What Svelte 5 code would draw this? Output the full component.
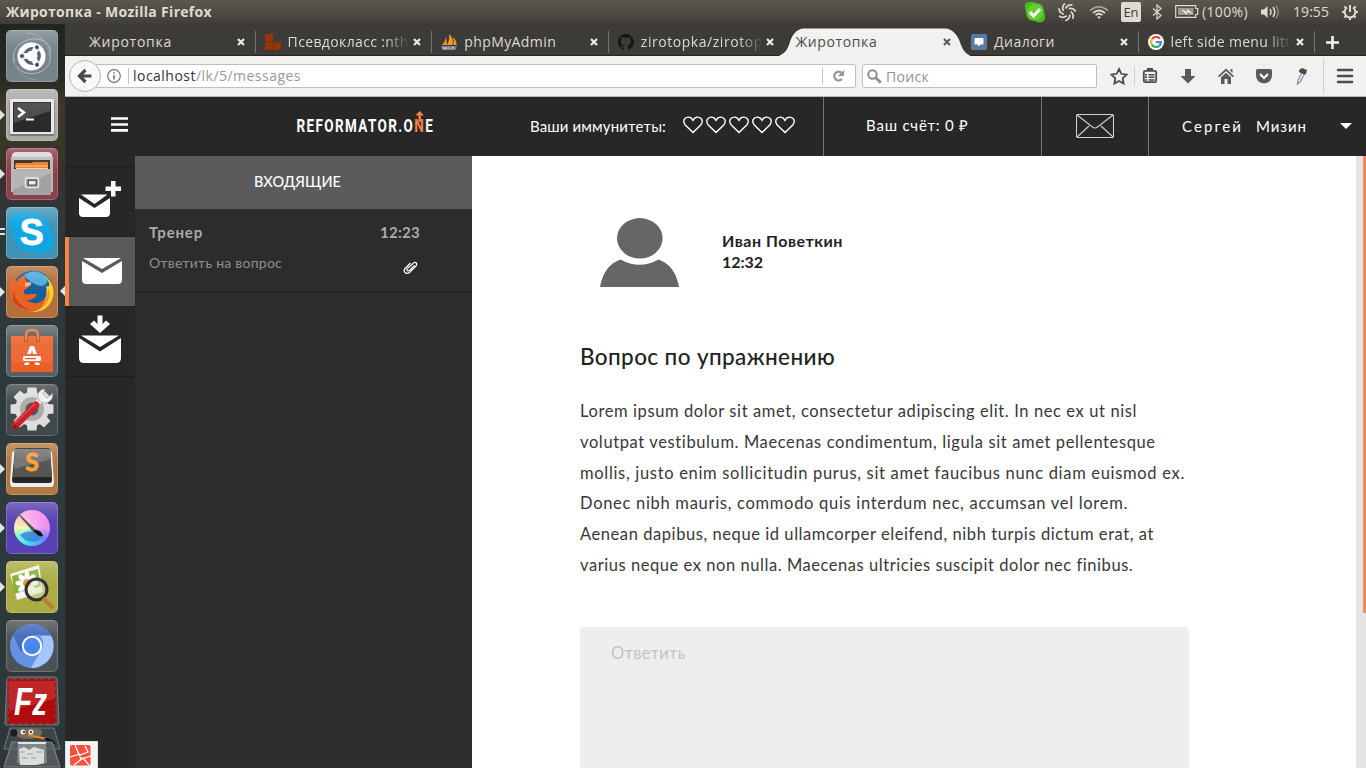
<script>
  // Spreads a line of text over a given width by adjusting its tracking.
  function fit(node, width) {
    const natural = node.getBoundingClientRect().width;
    node.style.letterSpacing = `${(width - natural) / node.textContent.length}px`;
  }

  const tabs = [
    { title: 'Жиротопка', icon: null, w: 83 },
    { title: 'Псевдокласс :nth', icon: 'blocks', w: 121, cut: true },
    { title: 'phpMyAdmin', icon: 'pma', w: 92 },
    { title: 'zirotopka/zirotop', icon: 'github', w: 122, cut: true },
    { title: 'Жиротопка', icon: null, w: 82, active: true },
    { title: 'Диалоги', icon: 'vk', w: 61 },
    { title: 'left side menu litt', icon: 'google', w: 120, cut: true }
  ];

  const apps = [
    { id: 'dash', bg: '#76848a' },
    { id: 'terminal', bg: '#aaa8a8', run: 1 },
    { id: 'files', bg: '#8e3f4c', run: 1 },
    { id: 'skype', bg: '#4193b4', run: 2 },
    { id: 'firefox', bg: '#b56f3a', run: 1, focus: true },
    { id: 'store', bg: '#596063' },
    { id: 'settings', bg: '#42494c' },
    { id: 'sublime', bg: '#b27840', run: 1 },
    { id: 'krita', bg: '#5741b3', run: 1 },
    { id: 'viewer', bg: '#abad42', run: 1 },
    { id: 'chromium', bg: '#4d5254' }
  ];

  const body = [
    ['Lorem ipsum dolor sit amet, consectetur adipiscing elit. In nec ex ut nisl', 557],
    ['volutpat vestibulum. Maecenas condimentum, ligula sit amet pellentesque', 576],
    ['mollis, justo enim sollicitudin purus, sit amet faucibus nunc diam euismod ex.', 605],
    ['Donec nibh mauris, commodo quis interdum nec, accumsan vel lorem.', 548],
    ['Aenean dapibus, neque id ullamcorper eleifend, nibh turpis dictum erat, at', 574],
    ['varius neque ex non nulla. Maecenas ultricies suscipit dolor nec finibus.', 553]
  ];
  const cog = [0, 45, 90, 135, 180, 225, 270, 315];
</script>

<div class="desktop">
  <div class="panel">
    <b class="wintitle"><span use:fit={206}>Жиротопка - Mozilla Firefox</span></b>
    <div class="tray">
      <svg class="t-skype" width="22" height="22" viewBox="0 0 22 22"><path d="M1 6Q0 1 6 1Q9 0 12 2Q20 2 20 11Q23 18 18 21Q14 22 11 20Q2 20 2 11Q1 9 1 6Z" fill="#4fb81c"/><circle cx="11" cy="11" r="8" fill="#65ce31"/><path d="M6 11l3.500 4L16 8" stroke="#fff" stroke-width="3" fill="none"/></svg>
      <svg class="t-swirl" width="18" height="18" viewBox="-9 -9 18 18" fill="none" stroke="#dfdbd2" stroke-width="1.700">{#each [0, 51, 103, 154, 206, 257, 309] as a}<path transform="rotate({a})" d="M-1.500-3.500Q1-8 5.500-7"/>{/each}</svg>
      <svg class="t-wifi" width="20" height="14" viewBox="0 0 20 14" fill="none" stroke="#dfdbd2"><path d="M1 5.500Q10-2 19 5.500" stroke="#aaa79f" stroke-width="1.600"/><path d="M4 8Q10 3 16 8" stroke-width="1.700"/><path d="M6.500 10.200Q10 7.300 13.500 10.200" stroke-width="1.700"/><path d="M8.200 12L10 14l1.800-2Q10 10.500 8.200 12" fill="#dfdbd2" stroke="none"/></svg>
      <span class="lang">En</span>
      <svg class="t-bt" width="10" height="16" viewBox="0 0 10 16" fill="none" stroke="#dfdbd2" stroke-width="1.200"><path d="M1 4.500l8 7-4 3.500V1l4 3.500-8 7"/></svg>
      <svg class="t-bat" width="24" height="13" viewBox="0 0 24 13"><path d="M.7.7h20v2.800h2v6h-2v2.800h-20z" fill="none" stroke="#dfdbd2" stroke-width="1.200"/><path d="M3 3h15.500v7H3z" fill="#9b988f"/><path d="M6 4l6 3 .5-3L18 9l-6-2-.5 3z" fill="#f1eee7"/></svg>
      <span class="pct" use:fit={46}>(100%)</span>
      <svg class="t-vol" width="20" height="16" viewBox="0 0 20 16" fill="none" stroke="#dfdbd2" stroke-width="1.500"><path d="M1 5.500h3L7.500 2v12L4 10.500H1z" fill="#dfdbd2" stroke="none"/><path d="M10 5q2 3 0 6M13 3q3.500 5 0 10"/><path d="M16 1.500q4.500 6.500 0 13" stroke="#8b887f"/></svg>
      <span class="clock" use:fit={36}>19:55</span>
      <svg class="t-cog" width="16" height="18" viewBox="-8 -9 16 18" fill="none" stroke="#dfdbd2"><path d="M-3-4.500A5.400 5.400 0 1 0 3-4.500M0-7V0" stroke-width="2"/>{#each [45, 90, 135, 180, 225, 270, 315] as a}<path transform="rotate({a})" d="M0-5.500V-8" stroke-width="2"/>{/each}</svg>
    </div>
  </div>

  <div class="work">
    <aside class="launcher">
      {#each apps as app}
        <div class="slot">
          <div class="tile {app.id}" style="background-color:{app.bg}">
            <svg width="52" height="52" viewBox="0 0 52 52">
              {#if app.id === 'dash'}
                <g fill="none" stroke="#aeb9bc"><path d="M8 33Q4 14 25 9Q40 7 45 20" /><path d="M43 16Q49 38 31 43Q17 46 11 36"/><path d="M20 3Q42 3 43 27M31 50Q10 49 8 28" opacity=".5"/></g>
                <circle cx="25.500" cy="26.500" r="14" fill="#fff"/><circle cx="26" cy="26" r="7.200" fill="none" stroke="#596468" stroke-width="3.400"/>
                {#each [60, 180, 300] as a}<g transform="rotate({a} 26 26)"><path d="M31 26h3" stroke="#fff" stroke-width="6"/><circle cx="36" cy="26" r="2.500" fill="#454e52" stroke="#fff"/></g>{/each}
              {:else if app.id === 'terminal'}
                <rect x="3.500" y="10" width="45" height="37" rx="2" fill="#777"/><rect x="4" y="10" width="44" height="35" rx="1" fill="#e9e9e9"/><rect x="7" y="13" width="38" height="30" fill="#2a2a2a"/><path d="M8 14h36v8L8 34z" fill="#666" opacity=".6"/><path d="M12 19l6 4.500-6 4.500" fill="none" stroke="#fff" stroke-width="2.500"/><path d="M20 30.500h8" stroke="#fff" stroke-width="2"/>
              {:else if app.id === 'files'}
                <path d="M6 6l3-2h34l3 2v38H6z" fill="#d8d8d8"/><path d="M5 9h42v35H5z" fill="#b9b9b9"/><path d="M8 12h36v10H8z" fill="#3d2b20"/><path d="M9 17l1-2h16l1-1h15v6H9z" fill="#ef7c2d"/><path d="M10 18h32M10 20.500h32" stroke="#ffcf9c"/><path d="M7 21h38v26H7z" fill="#a2a2a2"/><path d="M7 21h38v4L7 42z" fill="#bdbdbd" opacity=".7"/><rect x="19.500" y="30" width="13" height="9.500" rx="2" fill="#888" stroke="#ededed" stroke-width="1.400"/><rect x="22.500" y="32.500" width="7.500" height="4.500" fill="#eee" stroke="#555"/>
              {:else if app.id === 'skype'}
                <path d="M4 13Q5 4 15 5Q19 4 24 6Q44 6 46 27Q50 34 45 42Q39 49 29 45Q8 45 6 25Q4 19 4 13Z" fill="#11a5e3"/><text x="25.700" y="38" text-anchor="middle" font-family="Liberation Sans" font-weight="bold" font-size="36" fill="#fff" stroke="#fff" stroke-width=".8">S</text>
              {:else if app.id === 'firefox'}
                <circle cx="27" cy="25" r="20.500" fill="#155f9f"/><path d="M18 9Q29 1 41 11Q43 19 35 20Q24 18 18 9" fill="#4fa9dc"/><path d="M38 9Q50 18 47 31Q42 47 25 46L21 41Q44 40 40 20Q44 22 43 17Q41 12 38 9" fill="#ffd028"/><path d="M43 22Q46 36 34 43Q29 46 23 45Q40 40 43 22" fill="#f3952a"/><path d="M5 10Q7 15 11 15Q14 10 20 9Q17 14 24 17Q25 21 18 24Q17 30 24 28L31 28Q28 35 20 34Q29 41 39 33Q37 44 26 46Q5 44 4 25Q3 17 5 10Z" fill="#ea6326"/><path d="M19 17l6-1v3l-6 2z" fill="#e9b8a0"/><path d="M7 26Q11 39 24 44Q11 43 7 34z" fill="#c84120"/>
              {:else if app.id === 'store'}
                <path d="M5 11h42v36H5z" fill="#ee6a38"/><path d="M5 37h42v10H5z" fill="#ec5f26"/><path d="M20 17V10Q20 5 26 5Q32 5 32 10V17" fill="none" stroke="#b94c26" stroke-width="3.600"/><path d="M20 16V10Q20 5 26 5Q32 5 32 10V16" fill="none" stroke="#f08a62" stroke-width="1.600"/><path d="M24 21h4l3 8h-4l-1-4-1 4h-4z" fill="#fff"/><rect x="17" y="31" width="18" height="5" rx="1.500" fill="#fff"/><path d="M19 33h11v1.300H19z" fill="#e95920"/><path d="M19 37.500h4.500L22.500 40H18zM28.500 37.500H33l1 2.500h-4.500z" fill="#fff"/>
              {:else if app.id === 'settings'}
                {#each cog as a}<path transform="rotate({a} 26 25)" d="M21.500 3.500h9l1 9H20.500z" fill="#ddd"/>{/each}<circle cx="26" cy="25" r="17" fill="#ddd"/><circle cx="26" cy="25" r="12" fill="#ababab"/><circle cx="26" cy="25" r="6.500" fill="#52585a"/><path d="M28 23l8-9" stroke="#e6e6e6" stroke-width="6"/><path d="M39 5a7 7 0 0 0-6 11q6 7 13-1l1-6-6 5-4-4z" fill="#f0f0f0" stroke="#888" stroke-width=".6"/><path d="M9 42L30 21" stroke="#cc2028" stroke-width="7" stroke-linecap="round"/><path d="M9 39L29 20" stroke="#ed6b6c"/><circle cx="9" cy="43" r="2" fill="#7b191c"/>
              {:else if app.id === 'sublime'}
                <path d="M4 39L6 10q0-2 3-2h34q3 0 3 2l2 29q0 5-3 5H7q-3 0-3-5" fill="#eee"/><path d="M6 37L9 6q0-1 2-1h31q2 0 2 1l2 31q0 3-3 3H9q-3 0-3-3" fill="#252525"/><path d="M9 6h35l2 28H7z" fill="#555"/><path d="M9 6h35l1 10L8 26z" fill="#888" opacity=".6"/><text x="26" y="28" text-anchor="middle" font-family="Lato" font-weight="bold" font-size="25" fill="#fda137" stroke="#fda137" stroke-width=".8">S</text>
              {:else if app.id === 'krita'}
                <foreignObject x="8" y="8" width="36" height="36"><div class="wheel"></div></foreignObject><path d="M14 33Q20 28 28 30Q31 36 38 33Q31 43 19 38" fill="#347acd" opacity=".75"/><path d="M5 4L30 28l1 2-3 1-5-6z" fill="#555"/><path d="M28 28q7-1 9 6q-7 1-9-6" fill="#111"/>
              {:else if app.id === 'viewer'}
                <path d="M4 13L33 4l4 27-26 8z" fill="#f6f6ef"/><path d="M6 15l26-7 3 17-27 8z" fill="#86b23d"/>{#each cog as a}<ellipse transform="rotate({a} 21 22)" cx="21" cy="15.500" rx="2.600" ry="5" fill="#fff"/>{/each}<circle cx="21" cy="22" r="4" fill="#e6a135"/><circle cx="30.500" cy="28.500" r="10.500" fill="#dbe3be" opacity=".5"/><circle cx="30.500" cy="28.500" r="10.500" fill="none" stroke="#2d3135" stroke-width="3"/><path d="M37 37l10 10" stroke="#c17a38" stroke-width="4"/>
              {:else}
                <circle cx="26" cy="26" r="22" fill="#6493e6"/><path d="M7 15A22 22 0 0 1 45 15H26L15 32z" fill="#446bbb"/><path d="M45 16A22 22 0 0 1 25 48L36 29Q39 20 34 16z" fill="#a5c5fb"/><circle cx="26" cy="26" r="9.200" fill="#4687ee" stroke="#fff" stroke-width="2"/>
              {/if}
            </svg>
            <i class="gloss"></i>
          </div>
          {#if app.run === 1}<i class="pip"></i>{/if}
          {#if app.run === 2}<i class="pip two"></i>{/if}
          {#if app.focus}<i class="focus"></i>{/if}
        </div>
      {/each}
      <svg class="stack" width="65" height="94" viewBox="0 0 65 94">
        <path d="M9 1q-2 0-2 3L5 47q0 2 2 2h50q2 0 2-2L57 4q0-3-2-3z" fill="#5b5051" stroke="#777c7e"/>
        <path d="M9 4h46v43H9z" fill="#b20b0e"/><path d="M9 4h46v43H9z" fill="none" stroke="#b20b0e" stroke-width="3" stroke-dasharray="4 3"/><path d="M9 5h46v18L9 35z" fill="#df6664" opacity=".3"/>
        <text x="14" y="39" font-family="Liberation Sans" font-weight="bold" font-style="italic" font-size="39" fill="#fff" textLength="33" lengthAdjust="spacingAndGlyphs">Fz</text>
        <path d="M10 52L4 73h56l-6-21z" fill="#3e4546" stroke="#747979"/><path d="M15 54q12-4 27 0q1 8-10 9q-15 1-20-7" fill="#756957"/><circle cx="14" cy="57" r="3.500" fill="#171c21"/><circle cx="23" cy="56" r="2.500" fill="#e9e9e9"/><circle cx="31" cy="56" r="2.500" fill="#e9e9e9"/><circle cx="24" cy="56" r="1" fill="#111"/><circle cx="31" cy="56" r="1" fill="#111"/><path d="M28 59l19 4" stroke="#e58a26" stroke-width="2"/><path d="M44 62q7-1 12 6q-9-1-12-6" fill="#111"/>
        <path d="M12 66L4 91h56l-8-25z" fill="#5c6263" fill-opacity=".8" stroke="#878c8d"/><path d="M18 66h28l1 21q-15 4-30 0z" fill="#a2a6a5" opacity=".6"/><path d="M19 73l5-2 5 3 5-3 10 3v13l-8 2H20z" fill="#dcdedb"/><path d="M20 76h5m2 2h6m3-2h6m-20 6h6m3 0h5" stroke="#bbb" stroke-width="2"/><path d="M18 67h28" stroke="#e4e7e7" stroke-width="2"/>
      </svg>
    </aside>

    <div class="browser">
      <div class="tabstrip">
        {#each tabs as tab, i}
          <div class="tab" class:active={tab.active} class:nosep={i === 3 || i === 4}>
            {#if tab.active}
              <svg class="shape" width="206" height="29" viewBox="0 0 206 29"><path d="M0 28.500Q10 28 14 17Q18 1 29 .5H170Q181 1 186 17Q190 28 199 28.500V29H0z" fill="#f2f1f0"/></svg>
            {/if}
            {#if tab.icon}
              <svg class="fav" width="16" height="16" viewBox="0 0 16 16">
                {#if tab.icon === 'blocks'}<path d="M0 0h8v7.500H0zM0 8.300h7.600V16H0zM8.300 8.300H16V16H8.300z" fill="#993300"/>
                {:else if tab.icon === 'pma'}<path d="M1 11Q4 8 5 3L6 11zM6 11Q9 6 8 0q5 4 3.500 11zM12.500 11q.5-4-.5-8 4 4 3.500 8z" fill="#f29a24"/><path d="M0 12h16l-1.500 4H2z" fill="#77789c"/><path d="M2 15.500v-2.500l2 2 1-2 1 2m2 0v-2m2 2l2-2 1 2" stroke="#ddd" fill="none" stroke-width=".8"/>
                {:else if tab.icon === 'github'}<path d="M8 0a8 8 0 0 0-2.600 15.600c.4.100.6-.2.6-.4v-1.500c-2.200.5-2.700-1-2.700-1-.4-.9-.9-1.200-.9-1.200-.7-.5.1-.5.1-.5.8.1 1.200.8 1.200.8.7 1.300 1.900.9 2.300.7.100-.5.300-.9.500-1.100-1.800-.2-3.600-.9-3.600-4 0-.9.300-1.600.8-2.100-.1-.2-.4-1 .1-2.200 0 0 .7-.2 2.200.8a7.500 7.500 0 0 1 4 0c1.500-1 2.200-.8 2.200-.8.400 1.100.2 2 .1 2.200.5.600.8 1.300.8 2.100 0 3.100-1.900 3.700-3.700 4 .3.200.6.700.6 1.500v2.200c0 .2.100.5.600.4A8 8 0 0 0 8 0z" fill="#161514"/>
                {:else if tab.icon === 'vk'}<rect width="16" height="16" rx="1.500" fill="#587ba4"/><path d="M4.500 4h7q1 0 1 1v4.500q0 1-1 1H9.500L7 12.500v-2H4.500q-1 0-1-1V5q0-1 1-1" fill="#fff"/>
                {:else}<circle cx="8" cy="8" r="8" fill="#fff"/><g fill="none" stroke-width="2.200"><path d="M12 4.700A5 5 0 0 0 4 5.100" stroke="#ea4335"/><path d="M4 5.100a5 5 0 0 0-.2 5.500" stroke="#fbbc05"/><path d="M3.800 10.600a5 5 0 0 0 7.500 1.200" stroke="#34a853"/><path d="M11.300 11.800A5 5 0 0 0 12.900 8H8" stroke="#4285f4"/></g>{/if}
              </svg>
            {/if}
            <span class="name" class:cut={tab.cut} use:fit={tab.w}>{tab.title}</span>
            <svg class="close" width="8" height="8" viewBox="0 0 8 8"><path d="M1 1l6 6M7 1L1 7" stroke-width="2.200"/></svg>
          </div>
        {/each}
        <svg class="plus" width="13" height="13" viewBox="0 0 13 13"><path d="M6.500 0v13M0 6.500h13" stroke="#f4f3f1" stroke-width="2.600"/></svg>
      </div>

      <div class="toolbar">
        <div class="back"><svg width="16" height="16" viewBox="0 0 16 16"><path d="M14.500 8H3M8.500 2L2.500 8l6 6" fill="none" stroke="#4a4a4a" stroke-width="3.200"/></svg></div>
        <div class="url">
          <svg class="info" width="14" height="14" viewBox="0 0 14 14"><circle cx="7" cy="7" r="6.300" fill="none" stroke="#777" stroke-width="1.200"/><path d="M7 6v4.500M7 3.200v1.600" stroke="#777" stroke-width="1.600"/></svg>
          <span class="addr"><span use:fit={168}>localhost<em>/lk/5/messages</em></span></span>
          <svg class="reload" width="33" height="16" viewBox="0 0 33 16"><path d="M.5 0v16" stroke="#c6c5c3"/><path d="M20 11A4.400 4.400 0 1 1 19.800 5" fill="none" stroke="#8c98a3" stroke-width="2.200"/><path d="M22 2v6h-6z" fill="#8c98a3"/></svg>
        </div>
        <div class="search">
          <svg width="15" height="15" viewBox="0 0 15 15"><circle cx="5.500" cy="5.500" r="4.200" fill="none" stroke="#8d8d8d" stroke-width="2"/><path d="M8.800 8.800l5 5" stroke="#8d8d8d" stroke-width="2.800"/></svg>
          <span use:fit={43}>Поиск</span>
        </div>
        <svg class="tools" width="269" height="40" viewBox="0 0 269 40" fill="#4c4c4c">
          <path d="M22 13l2.300 4.800 5.200.8-3.800 3.700.9 5.200-4.600-2.500-4.600 2.500.9-5.200-3.800-3.700 5.200-.8z" fill="none" stroke="#4c4c4c" stroke-width="1.800"/>
          <path d="M37.500 11v18M226.500 3v34" stroke="#d0cfcd"/>
          <rect x="46.800" y="14.800" width="12.400" height="11.400" rx="1.500" fill="none" stroke="#4c4c4c" stroke-width="1.800"/><path d="M50 12h6v3h-6zM48 18h2v1.500h-2zM51.500 18h6v1.500h-6zM48 20.500h2V22h-2zM51.500 20.500h6V22h-6zM48 23.200h2v1.500h-2zM51.500 23.200h6v1.500h-6z"/>
          <path d="M88 13h6v7h4.500L91 27.500 83.500 20H88z" fill="#5a5a5a"/>
          <path d="M129 12.500l8 7.500-1.200 1.200-6.800-6.300-6.800 6.300L121 20zM133.500 13h2v4l-2-2zM124 21.300l5-4.600 5 4.600V28h-3.500v-5h-3v5H124z" fill="#5a5a5a"/>
          <path d="M160.500 13h13q1.500 0 1.500 1.500V19q0 7.500-8 8.500q-8-1-8-8.500v-4.500q0-1.500 1.500-1.500" fill="#5a5a5a"/><path d="M163 18l4 4 4-4" fill="none" stroke="#fff" stroke-width="2"/>
          <path d="M202 14l3-2 5 2-1 4-2 1-5-3z"/><path d="M204.500 17.500l-3.500 7-.5 3.500 2.500-2 4-7" fill="#f7f7fb" stroke="#8292aa" stroke-width="1.300"/>
          <path d="M241 14h14M241 20h14M241 26h14" stroke="#4c4c4c" stroke-width="2.600" stroke-linecap="round"/>
        </svg>
      </div>

      <header class="head">
        <svg class="burger" width="17" height="15" viewBox="0 0 17 15"><path d="M0 1.500h17M0 7.500h17M0 13.300h17" stroke="#fff" stroke-width="2.700"/></svg>
        <svg class="logo" width="140" height="26" viewBox="0 0 140 26">
          <text transform="translate(1.500 22) scale(.77 1)" class="wordmark" fill="#fff" textLength="177" lengthAdjust="spacing">REFORMATOR.O<tspan fill="#fb8044">N</tspan>E</text>
          <path d="M123.500 12V5.500h-3.100L124.700 1 129 5.500h-3.100V12z" fill="#fb8044"/>
        </svg>
        <div class="lives">
          <span use:fit={136}>Ваши иммунитеты:</span>
          <div class="hearts">{#each [1, 2, 3, 4, 5] as n}<svg width="20" height="18" viewBox="0 0 20 18"><path d="M10 16.600L2 8.700Q-.5 5 2 2.500Q4 .7 6.500 1.300Q8.500 1.700 10 4.300Q11.500 1.700 13.500 1.300Q16 .7 18 2.500Q20.500 5 18 8.700z" fill="none" stroke="#fff" stroke-width="1.400"/></svg>{/each}</div>
        </div>
        <div class="bill"><span use:fit={103}>Ваш счёт: 0 ₽</span></div>
        <div class="post"><svg width="38" height="24" viewBox="0 0 38 24" fill="none" stroke="#d0d0d0" stroke-width="1.100"><rect x=".5" y=".5" width="37" height="23" rx="1.500"/><path d="M1 1l15.500 12q2.500 2 5 0L37 1M1 23l12-11M37 23L25 12"/></svg></div>
        <div class="user"><span use:fit={61}>Сергей</span><span use:fit={51}>Мизин</span><i></i></div>
      </header>

      <div class="page">
        <nav class="rail">
          <div class="rail-item"><svg width="70" height="69" viewBox="0 0 70 69" fill="#fff"><path d="M14 31v15q0 4 4 4h23q4 0 4-4V31L29.500 41z"/><path d="M16 27.500h26.500L29.500 37z"/><path d="M46 14h4.500v5.500H56V24h-5.500v5.500H46V24h-5.500v-4.500H46z"/></svg></div>
          <div class="rail-item on"><svg width="70" height="69" viewBox="0 0 70 69" fill="#fff"><path d="M17 24v19q0 4 4 4h32q4 0 4-4V24L37 36z"/><path d="M18 21h38L37 32z"/></svg></div>
          <div class="rail-item"><svg width="70" height="69" viewBox="0 0 70 69" fill="#fff"><path d="M14 31v20q0 5 5 5h32q5 0 5-5V31L35 44.500z"/><path d="M16 28.500h38L35 40z"/><path d="M32.500 8.500h5V17l3.500-3.500 4 3.500-10 9-10-9 4-3.500 3.500 3.500z"/></svg></div>
          <div class="debug"><svg width="22" height="21" viewBox="0 0 22 21"><rect width="20.500" height="20.500" rx="2" fill="#fb503b"/><path d="M5 0l6 14L21 11M0 12l10-3M10 10l8-3L15 1M4 20l9-7 6 7" fill="none" stroke="#fff" stroke-width="1.300"/></svg></div>
        </nav>
        <section class="inbox">
          <h2><span use:fit={87}>ВХОДЯЩИЕ</span></h2>
          <div class="mail">
            <div class="row strong"><span use:fit={54}>Тренер</span><span use:fit={40}>12:23</span></div>
            <div class="row"><span use:fit={133}>Ответить на вопрос</span><svg width="16" height="15" viewBox="0 0 16 15"><path d="M11.500 5.500L7 10Q4.500 11.800 4 10.300T5 8L10 3.500Q12 1.500 13.300 3T12.500 6.500L7 12Q4 14.500 2 12.500T2.500 8L7.500 3" fill="none" stroke="#fff" stroke-width="1.200"/></svg></div>
          </div>
        </section>
        <main class="message">
          <div class="sender">
            <svg width="79" height="70" viewBox="0 0 79 70" fill="#666"><ellipse cx="39.800" cy="20.300" rx="22.800" ry="20.200"/><path d="M0 69Q4 47 20.500 41.500Q39.500 52 58.500 41.500Q75 47 79 69z"/></svg>
            <div><p><span use:fit={121}>Иван Поветкин</span></p><p><span use:fit={41}>12:32</span></p></div>
          </div>
          <h1><span use:fit={255}>Вопрос по упражнению</span></h1>
          <div class="text">{#each body as [line, w]}<p><span use:fit={w}>{line}</span></p>{/each}</div>
          <div class="reply"><span use:fit={75}>Ответить</span></div>
        </main>
        <div class="scroll"><i></i></div>
      </div>
    </div>
  </div>
</div>

<style>
  :global(body) { margin: 0; overflow: hidden; }
  * { box-sizing: border-box; }
  span { white-space: nowrap; display: inline-block; }
  svg { display: block; flex: none; }
  p, h1, h2 { margin: 0; }
  .desktop { width: 1366px; height: 768px; display: flex; flex-direction: column; overflow: hidden; font-family: "Open Sans", "Noto Sans", sans-serif; }

  .panel { height: 24px; flex: none; display: flex; justify-content: space-between; align-items: center; padding: 0 8px 1px 6px; background: linear-gradient(#5b584f, #45433c 80%, #3e3d37); color: #dfdbd2; font-size: 14px; }
  .wintitle { font-size: 14px; }
  .tray { display: flex; align-items: center; }
  .t-swirl { margin-left: 12px; }
  .t-wifi { margin-left: 13px; }
  .lang { width: 20px; height: 20px; margin-left: 12px; background: #dfdbd2; color: #3c3b37; border-radius: 2px; font-size: 13px; line-height: 20px; text-align: center; }
  .t-bt { margin-left: 11px; }
  .t-bat { margin-left: 13px; }
  .pct { margin-left: 3px; }
  .t-vol { margin-left: 12px; }
  .clock { margin-left: 13px; }
  .t-cog { margin-left: 13px; }

  .work { flex: 1; display: flex; min-height: 0; }
  .launcher { width: 65px; flex: none; padding-top: 6px; overflow: hidden; background: linear-gradient(#20251f, #292b22 55px, #3f3926 85px, #363828 110px, #3d3129 150px, #2f3738 185px, #2e3a3e 420px, #2d3739); }
  .slot { height: 59px; padding-left: 6px; position: relative; }
  .tile { width: 52px; height: 52px; border-radius: 5px; position: relative; overflow: hidden; }
  .gloss { position: absolute; inset: 0; border-radius: 5px; box-shadow: inset 0 0 0 1px rgba(255,255,255,.2); background: linear-gradient(rgba(255,255,255,.22), rgba(255,255,255,.04) 30%, transparent 50%); }
  .wheel { width: 36px; height: 36px; border-radius: 50%; background: radial-gradient(rgba(255,255,255,.3), transparent 60%), conic-gradient(#f79be8, #f08cf3 25%, #5f8cff 37%, #3fd5fa 52%, #6ff8dc 65%, #f5f9a3 75%, #ffbdd1 88%, #f79be8); }
  .pip { position: absolute; left: 0; top: 21px; border: 5px solid transparent; border-left: 5px solid #e4e4e4; border-right: 0; }
  .pip.two { border: 0; width: 5px; height: 7px; border-top: 2px solid #ddd; border-bottom: 2px solid #ddd; }
  .focus { position: absolute; left: 60px; top: 20px; border: 5px solid transparent; border-right-color: #e4e4e4; border-left: 0; }
  .stack { margin-top: -3px; }

  .browser { flex: 1; min-width: 0; display: flex; flex-direction: column; }
  .tabstrip { height: 32px; flex: none; display: flex; padding-left: 13px; background: #3c3b37; border-bottom: 1px solid #262522; color: #dddad5; font-size: 14px; }
  .tab { width: 176.600px; height: 31px; display: flex; align-items: center; position: relative; padding: 5px 10px 0 11px; gap: 6px; }
  .tab::after { content: ""; position: absolute; right: -1px; top: 7px; width: 1px; height: 22px; background: #76746e; }
  .tab.nosep::after { display: none; }
  .tab.active { color: #4c4c4c; }
  .shape { position: absolute; left: -9px; top: 4px; }
  .name { position: relative; line-height: 20px; }
  .cut { -webkit-mask-image: linear-gradient(90deg, #000 80%, transparent); mask-image: linear-gradient(90deg, #000 80%, transparent); }
  .fav { position: relative; left: -1px; }
  .close { position: absolute; right: 10px; top: 14px; stroke: #eceae5; }
  .active .close { stroke: #5c5b58; }
  .plus { margin: 12px 0 0 12px; }

  .toolbar { height: 41px; flex: none; display: flex; align-items: center; background: #f2f1f0; border-bottom: 1px solid #b6b5b3; padding-left: 4px; font-size: 14px; }
  .back { width: 32px; height: 32px; flex: none; display: grid; place-items: center; border: 1px solid #b9b8b6; border-radius: 50%; background: #f9f9f9; position: relative; z-index: 1; }
  .url { width: 761px; height: 24px; margin-left: -6px; display: flex; align-items: center; background: #fff; border: 1px solid #c0bfbd; border-radius: 2px; padding-left: 11px; }
  .addr { flex: 1; margin-left: 7px; border-left: 1px solid #c6c5c3; padding-left: 4px; line-height: 16px; color: #333; }
  .addr em { font-style: normal; color: #999; }
  .search { width: 235px; height: 24px; margin-left: 6px; display: flex; align-items: center; gap: 4px; background: #fff; border: 1px solid #c0bfbd; border-radius: 2px; padding-left: 4px; color: #929292; }
  .tools { height: 40px; }

  .head { height: 59px; flex: none; display: flex; align-items: center; background: #272727; color: #fff; font-family: Lato, sans-serif; font-size: 15px; }
  .burger { margin: -4px 0 0 46px; }
  .logo { margin: -7px 0 0 167px; overflow: visible; }
  .wordmark { font: bold 17.500px Roboto, sans-serif; stroke: none; }
  .lives { width: 293px; display: flex; align-items: center; margin-left: 95px; gap: 18px; }
  .lives > span { margin-top: -2px; }
  .hearts { display: flex; gap: 3px; margin: -3px 0 0 -1px; }
  .bill { width: 218px; height: 59px; padding-left: 42px; border-left: 1px solid #777; line-height: 57px; }
  .post { width: 107px; height: 59px; padding: 17px 0 0 34px; border-left: 1px solid #777; }
  .user { flex: 1; height: 59px; display: flex; align-items: center; padding: 0 0 1px 33px; border-left: 1px solid #777; gap: 13px; }
  .user i { margin-left: 20px; border: 6px solid transparent; border-top: 6px solid #fff; border-bottom: 0; }

  .page { flex: 1; min-height: 0; display: flex; }
  .rail { width: 70px; flex: none; display: flex; flex-direction: column; background: #272727; padding-top: 10px; }
  .rail-item { height: 70px; border-top: 1px solid #1e1e1e; }
  .rail-item:nth-child(3) { height: 71px; border-bottom: 1px solid #1e1e1e; }
  .rail-item.on { background: #5a5a5a; box-shadow: inset 4px 0 #fc8145; }
  .debug { width: 33px; height: 27px; margin-top: auto; background: #f4f4f4; border: 1px solid #ddd; border-bottom: 0; padding: 3px 0 0 4px; }
  .inbox { width: 337px; flex: none; background: #2c2c2c; font-family: Lato, sans-serif; }
  .inbox h2 { height: 53px; background: #5b5b5b; color: #fff; font-size: 14.500px; font-weight: 500; line-height: 52px; padding-left: 119px; }
  .mail { height: 84px; padding: 13px 52px 0 14px; border-bottom: 1px solid #222; color: #8f8f8f; font-size: 14px; }
  .row { display: flex; justify-content: space-between; line-height: 20px; }
  .row + .row { margin-top: 11px; }
  .row svg { margin: 7px 1px 0 0; }
  .strong { font-weight: bold; color: #ababab; font-size: 15px; }
  .message { flex: 1; padding: 62px 0 0 108px; background: #fff; color: #2c2c2c; font-family: Lato, sans-serif; display: flex; flex-direction: column; }
  .sender { height: 70px; padding-left: 20px; display: flex; gap: 43px; font-weight: bold; font-size: 16px; line-height: 21px; color: #222; }
  .sender div { padding-top: 12px; }
  h1 { margin-top: 51px; font-size: 22.500px; line-height: 36px; color: #222; font-weight: 500; }
  .text { margin-top: 21px; font-size: 16.500px; line-height: 30.800px; color: #383838; }
  .reply { width: 609px; flex: 1; margin-top: 46px; border-radius: 4px 4px 0 0; background: #eee; padding: 14px 31px; font-size: 16.500px; line-height: 24px; color: #c5c3c3; }
  .scroll { width: 10px; background: #e4e4e4; }
  .scroll i { display: block; width: 3px; height: 457px; margin-left: auto; background: #f08a5f; }
</style>
